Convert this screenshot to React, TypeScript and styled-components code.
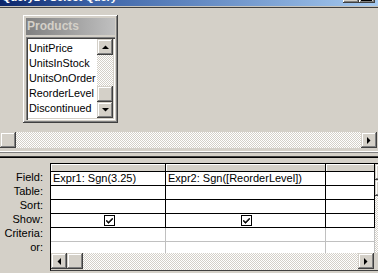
import styled, { createGlobalStyle } from 'styled-components'

const GlobalStyle = createGlobalStyle`
	html, body {
		margin: 0;
		padding: 0;
		background: #d4d0c8;
	}
	body {
		font-family: "Liberation Sans", Arial, sans-serif;
		font-size: 11px;
		color: #000;
	}
`

const fields = ['UnitPrice', 'UnitsInStock', 'UnitsOnOrder', 'ReorderLevel', 'Discontinued']

const rows = [
	{ label: 'Field:', cells: ['Expr1: Sgn(3.25)', 'Expr2: Sgn([ReorderLevel])', ''], strong: true },
	{ label: 'Table:', cells: ['', '', ''], strong: true },
	{ label: 'Sort:', cells: ['', '', ''], strong: true },
	{ label: 'Show:', cells: ['check', 'check', ''], strong: true },
	{ label: 'Criteria:', cells: ['', '', ''], strong: false },
	{ label: 'or:', cells: ['', '', ''], strong: false },
]

// column widths of the design grid (col3 is cut by the vertical scrollbar)
const colWidths = [115, 160, 49]

const Arrow = ({ dir }: { dir: 'up' | 'down' | 'left' | 'right' }) => {
	const pts = {
		up: '0,4 7,4 3.5,0.5',
		down: '0,0 7,0 3.5,3.5',
		left: '4,0 4,7 0.5,3.5',
		right: '0,0 0,7 3.5,3.5',
	}[dir]
	const vertical = dir === 'up' || dir === 'down'
	return (
		<svg width={vertical ? 7 : 4} height={vertical ? 4 : 7} viewBox={vertical ? '0 0 7 4' : '0 0 4 7'}>
			<polygon points={pts} fill="#000" />
		</svg>
	)
}

const CheckBox = () => (
	<svg width="11" height="11" viewBox="0 0 11 11">
		<rect x="0.5" y="0.5" width="10" height="10" fill="#fff" stroke="#000" />
		<path d="M2.5 5 L4.5 7 L8.5 3 L8.5 4.5 L4.5 8.5 L2.5 6.5 Z" fill="#000" stroke="#000" strokeWidth="0.6" />
	</svg>
)

export default function App(): JSX.Element {
	return (
		<>
			<GlobalStyle />
			<Window>
				<TitleBar>
					<TitleText>Query1 : Select Query</TitleText>
					<Controls>
						<CtrlBtn><MinGlyph /></CtrlBtn>
						<CtrlBtn><MaxGlyph /></CtrlBtn>
					</Controls>
				</TitleBar>
				<ClientEdge />

				<TablePane>
					<TableBox>
						<BoxTitle>Products</BoxTitle>
						<FieldList>
							<Items>
								{fields.map((f) => <Item key={f}>{f}</Item>)}
							</Items>
							<VScroll>
								<ScrollBtn><Arrow dir="up" /></ScrollBtn>
								<Track $grow />
								<ScrollBtn />
								<ScrollBtn><Arrow dir="down" /></ScrollBtn>
							</VScroll>
						</FieldList>
					</TableBox>
				</TablePane>

				<HScroll>
					<ScrollBtn />
					<Track $grow />
					<ScrollBtn><Arrow dir="right" /></ScrollBtn>
				</HScroll>

				<Splitter />

				<DesignPane>
					<Labels>
						{rows.map((r) => <Label key={r.label}>{r.label}</Label>)}
					</Labels>
					<GridFrame>
						<GridArea>
							<Grid>
								<HeaderRow>
									{colWidths.map((w, i) => <HeaderCell key={i} style={{ width: w }} />)}
								</HeaderRow>
								{rows.map((r) => (
									<Row key={r.label} $strong={r.strong}>
										{r.cells.map((c, i) => (
											<Cell key={i} style={{ width: colWidths[i] }} $strong={r.strong} $center={c === 'check'}>
												{c === 'check' ? <CheckBox /> : c}
											</Cell>
										))}
									</Row>
								))}
							</Grid>
							<GridVScroll>
								<ScrollBtn><Arrow dir="up" /></ScrollBtn>
								<ScrollBtn />
								<Track $grow />
							</GridVScroll>
						</GridArea>
						<GridHScroll>
							<ScrollBtn><Arrow dir="left" /></ScrollBtn>
							<ScrollBtn />
							<Track $grow />
							<ScrollBtn><Arrow dir="right" /></ScrollBtn>
							<Corner />
						</GridHScroll>
					</GridFrame>
				</DesignPane>
			</Window>
		</>
	)
}

const Window = styled.div`
	width: 378px;
	height: 273px;
	overflow: hidden;
	display: flex;
	flex-direction: column;
	background: #d4d0c8;
`
const TitleBar = styled.div`
	height: 6px;
	flex: none;
	display: flex;
	justify-content: space-between;
	overflow: hidden;
	background: linear-gradient(to right, #0a246a 0%, #3d64a8 25%, #a6caf0 100%);
`
const TitleText = styled.div`
	margin-top: -10px;
	padding-left: 2px;
	font-weight: bold;
	font-size: 11px;
	line-height: 14px;
	color: #fff;
	white-space: nowrap;
`
const Controls = styled.div`
	display: flex;
	align-items: flex-start;
	margin-right: 3px;
	margin-top: -11px;
`
const CtrlBtn = styled.div`
	width: 16px;
	height: 14px;
	box-sizing: border-box;
	position: relative;
	background: #d4d0c8;
	box-shadow: inset -1px -1px #404040, inset 1px 1px #fff, inset -2px -2px #808080;
`
const MinGlyph = styled.div`
	position: absolute;
	left: 4px;
	top: 9px;
	width: 9px;
	height: 2px;
	background: #000;
`
const MaxGlyph = styled.div`
	position: absolute;
	left: 2px;
	top: 2px;
	width: 9px;
	height: 7px;
	border: 1px solid #000;
	border-top-width: 2px;
`
const ClientEdge = styled.div`
	height: 2px;
	flex: none;
	box-sizing: border-box;
	border-top: 1px solid #c8c4bc;
	border-bottom: 1px solid #404040;
`
const TablePane = styled.div`
	height: 124px;
	flex: none;
	padding: 7px 0 0 23px;
	box-sizing: border-box;
`
const TableBox = styled.div`
	width: 95px;
	height: 108px;
	box-sizing: border-box;
	padding: 3px;
	display: flex;
	flex-direction: column;
	gap: 2px;
	background: #d4d0c8;
	box-shadow: inset -1px -1px #404040, inset 1px 1px #fff, inset -2px -2px #808080;
`
const BoxTitle = styled.div`
	height: 17px;
	flex: none;
	padding-left: 1px;
	font-weight: bold;
	font-size: 12px;
	line-height: 17px;
	color: #d4d0c8;
	background: linear-gradient(to right, #808080, #c0c0c0);
`
const FieldList = styled.div`
	flex: 1;
	display: flex;
	background: #fff;
	padding: 2px;
	box-sizing: border-box;
	box-shadow: inset 1px 1px #808080, inset 2px 2px #404040, inset -1px -1px #fff, inset -2px -2px #d4d0c8;
	overflow: hidden;
`
const Items = styled.div`
	flex: 1;
	padding: 2px 0 0 1px;
	overflow: hidden;
`
const Item = styled.div`
	height: 15px;
	line-height: 15px;
	font-size: 10.8px;
	white-space: nowrap;
`
const VScroll = styled.div`
	width: 16px;
	flex: none;
	display: flex;
	flex-direction: column;
`
const ScrollBtn = styled.div`
	width: 16px;
	height: 16px;
	flex: none;
	box-sizing: border-box;
	display: flex;
	align-items: center;
	justify-content: center;
	background: #d4d0c8;
	box-shadow: inset -1px -1px #404040, inset 1px 1px #d4d0c8, inset -2px -2px #808080, inset 2px 2px #fff;
`
const Track = styled.div<{ $grow?: boolean }>`
	flex: ${(p) => (p.$grow ? 1 : 'none')};
	background: repeating-conic-gradient(#fff 0 25%, #d4d0c8 0 50%) 0 0 / 2px 2px;
`
const HScroll = styled.div`
	height: 16px;
	flex: none;
	display: flex;
	padding-right: 1px;
`
const Splitter = styled.div`
	height: 15px;
	flex: none;
	box-sizing: border-box;
	border-top: 3px solid #d4d0c8;
	background: linear-gradient(#fff 0 1px, #808080 1px 2px, #d4d0c8 2px 5px, #404040 5px 6px, #000 6px 7px, #d4d0c8 7px);
`
const DesignPane = styled.div`
	flex: 1;
	display: flex;
	min-height: 0;
`
const Labels = styled.div`
	width: 50px;
	flex: none;
	padding-top: 7px;
	box-sizing: border-box;
`
const Label = styled.div`
	height: 14px;
	line-height: 14px;
	padding-right: 7px;
	text-align: right;
	font-size: 11px;
`
const GridFrame = styled.div`
	flex: 1;
	display: flex;
	flex-direction: column;
	border-left: 1px solid #000;
	border-top: 1px solid #000;
	height: 108px;
	box-sizing: border-box;
	border-bottom: 1px solid #404040;
	min-width: 0;
	overflow: hidden;
`
const GridArea = styled.div`
	flex: 1;
	display: flex;
	min-height: 0;
	overflow: hidden;
`
const Grid = styled.div`
	flex: none;
	display: flex;
	flex-direction: column;
	background: #fff;
	overflow: hidden;
`
const HeaderRow = styled.div`
	display: flex;
	height: 7px;
	flex: none;
	border-bottom: 1px solid #000;
`
const HeaderCell = styled.div`
	height: 7px;
	flex: none;
	box-sizing: border-box;
	background: #d4d0c8;
	border-right: 1px solid #000;
	box-shadow: inset 1px 1px #fff;
`
const Row = styled.div<{ $strong: boolean }>`
	display: flex;
	height: 14px;
	flex: none;
	box-sizing: border-box;
	border-bottom: 1px solid ${(p) => (p.$strong ? '#000' : '#c0c0c0')};
`
const Cell = styled.div<{ $strong: boolean; $center: boolean }>`
	height: 13px;
	flex: none;
	box-sizing: border-box;
	border-right: 1px solid ${(p) => (p.$strong ? '#000' : '#c0c0c0')};
	padding-left: 2px;
	line-height: 13px;
	font-size: 11px;
	white-space: nowrap;
	overflow: hidden;
	display: flex;
	align-items: center;
	justify-content: ${(p) => (p.$center ? 'center' : 'flex-start')};
`
const GridVScroll = styled.div`
	width: 16px;
	flex: none;
	display: flex;
	flex-direction: column;
`
const GridHScroll = styled.div`
	height: 17px;
	flex: none;
	display: flex;
`
const Corner = styled.div`
	width: 4px;
	flex: none;
	background: #d4d0c8;
`
